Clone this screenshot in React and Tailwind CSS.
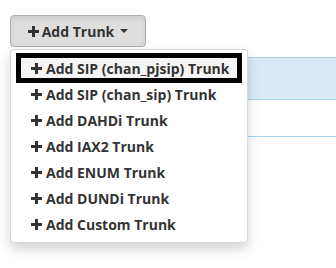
import React from 'react';

const items = [
  'Add SIP (chan_pjsip) Trunk',
  'Add SIP (chan_sip) Trunk',
  'Add DAHDi Trunk',
  'Add IAX2 Trunk',
  'Add ENUM Trunk',
  'Add DUNDi Trunk',
  'Add Custom Trunk',
];

function Plus() {
  return (
    <svg width="11" height="11" viewBox="0 0 11 11" className="shrink-0" aria-hidden="true">
      <rect x="4" y="0" width="3" height="11" fill="currentColor" />
      <rect x="0" y="4" width="11" height="3" fill="currentColor" />
    </svg>
  );
}

export default function App() {
  return (
    <div className="relative h-[268px] w-[336px] overflow-hidden bg-white pl-[10px] pt-[15px] font-['Open_Sans',sans-serif] text-[14px] font-bold text-[#333]">
      <button
        type="button"
        className="flex h-[32px] w-[136px] items-center justify-center gap-[3px] rounded-[4px] border border-[#adadad] bg-[#dedede] shadow-[inset_0_3px_5px_rgba(0,0,0,0.08)]"
      >
        <Plus />
        <span>Add Trunk</span>
        <span className="ml-[3px] h-0 w-0 border-x-[4px] border-t-[4px] border-x-transparent border-t-[#333]" />
      </button>

      {/* table behind the menu */}
      <div className="mt-[10px]">
        <div className="h-[43px] border-y border-[#a9d2ee] bg-[#d9eaf7]" />
        <div className="h-[37px] border-b border-[#a9d2ee]" />
      </div>

      <div className="absolute left-[10px] top-[49px] w-[238px] rounded-[4px] border border-[rgba(0,0,0,0.15)] bg-white py-[5px] shadow-[0_6px_12px_rgba(0,0,0,0.175)]">
        {items.map((label, i) =>
          i === 0 ? (
            <div
              key={label}
              className="mx-[5px] -my-[2px] flex h-[30px] items-center gap-[4px] border-[5px] border-black bg-[#f5f5f5] pl-[10px]"
            >
              <Plus />
              <span>{label}</span>
            </div>
          ) : (
            <div key={label} className="flex h-[26px] items-center gap-[4px] pl-[20px]">
              <Plus />
              <span>{label}</span>
            </div>
          )
        )}
      </div>
    </div>
  );
}
